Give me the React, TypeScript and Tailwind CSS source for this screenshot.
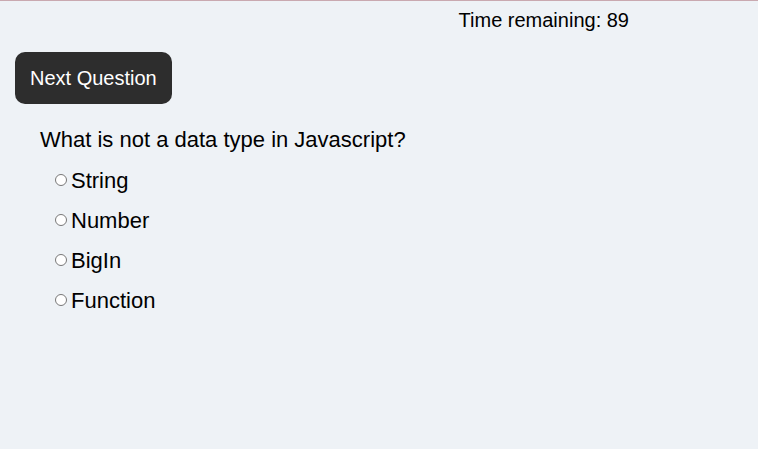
import { useState } from 'react';

const options = ['String', 'Number', 'BigIn', 'Function'];

export default function App() {
  const [picked, setPicked] = useState<string | null>(null);

  return (
    <div
      className="min-h-[449px] border-t border-[#c9a9b0] bg-[#eef2f6] text-black"
      style={{ fontFamily: '"Liberation Sans", Arial, sans-serif' }}
    >
      <div className="flex justify-end pr-[129px] pt-[8px] text-[20px] leading-[22px]">
        Time remaining: 89
      </div>

      <div className="px-[15px] pt-[21px]">
        <button className="h-[52px] rounded-[10px] bg-[#2d2d2d] px-[15px] text-[20px] text-white">
          Next Question
        </button>
      </div>

      <div className="pl-[40px] pt-[22px]">
        <p className="text-[22px] leading-[28px]">What is not a data type in Javascript?</p>
        <ul className="mt-[6px] pl-[15px]">
          {options.map((opt) => (
            <li key={opt} className="flex h-[40px] items-center text-[22px]">
              <label className="flex items-center">
                <input
                  type="radio"
                  name="answer"
                  checked={picked === opt}
                  onChange={() => setPicked(opt)}
                  className="m-0 mr-[4px] h-[12px] w-[12px]"
                />
                {opt}
              </label>
            </li>
          ))}
        </ul>
      </div>
    </div>
  );
}
